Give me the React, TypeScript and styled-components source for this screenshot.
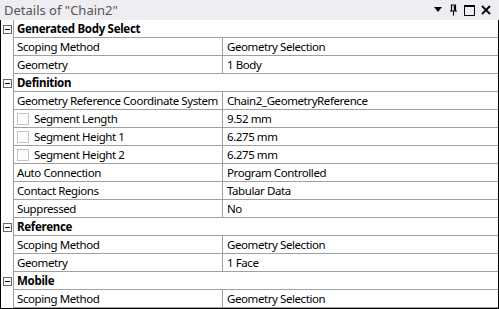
import { createGlobalStyle } from "styled-components";
import styled from "styled-components";

const Global = createGlobalStyle`
  *, *::before, *::after { box-sizing: border-box; }
  html, body { margin: 0; padding: 0; background: #fff; }
  body { font-family: "Noto Sans", "Open Sans", sans-serif; }
`;

const Panel = styled.div`
  width: 499px;
  height: 309px;
  display: flex;
  flex-direction: column;
  overflow: hidden;
  background: #fff;
`;

const TitleBar = styled.div`
  height: 20px;
  display: flex;
  align-items: center;
  background: #eeeef2;
  padding-left: 4px;
  padding-right: 8px;
`;

const Title = styled.span`
  font-size: 13px;
  color: #555;
  white-space: nowrap;
`;

const Grip = styled.div`
  flex: 1;
  height: 5px;
  margin: 0 8px 0 6px;
  background-image: radial-gradient(#a8a8b0 0.6px, transparent 0.7px);
  background-size: 2px 2px;
`;

const TitleIcons = styled.div`
  display: flex;
  align-items: center;
  gap: 6px;
`;

const Table = styled.div`
  flex: 1;
  border: 1px solid #000;
  border-top: none;
  display: flex;
  flex-direction: column;
`;

const Row = styled.div`
  height: 18px;
  display: flex;
`;

const Gutter = styled.div`
  width: 13px;
  flex: none;
  border-right: 1px solid #a0a0a0;
  display: flex;
  align-items: center;
  justify-content: center;
`;

const Expander = styled.div`
  width: 9px;
  height: 9px;
  border: 1px solid #666;
  position: relative;
  &::after {
    content: "";
    position: absolute;
    left: 1px;
    right: 1px;
    top: 3px;
    height: 1px;
    background: #000;
  }
`;

const Body = styled.div<{ $header?: boolean }>`
  flex: 1;
  display: flex;
  border-bottom: 1px solid #a0a0a0;
  font-size: 11.5px;
  letter-spacing: -0.42px;
  color: #000;
  font-weight: ${(p) => (p.$header ? 700 : 400)};
  line-height: 17px;
`;

const NameCell = styled.div`
  width: 209px;
  flex: none;
  border-right: 1px solid #a0a0a0;
  padding-left: 3px;
  display: flex;
  align-items: center;
  white-space: nowrap;
  overflow: hidden;
`;

const ValueCell = styled.div`
  flex: 1;
  padding-left: 4px;
  display: flex;
  align-items: center;
  white-space: nowrap;
`;

const HeaderCell = styled.div`
  padding-left: 3px;
  display: flex;
  align-items: center;
  letter-spacing: -0.3px;
`;

const Check = styled.span`
  width: 12px;
  height: 12px;
  border: 1px solid #c4c4c4;
  background: #fff;
  margin-right: 5px;
  flex: none;
`;

type Item =
  | { kind: "group"; label: string }
  | { kind: "prop"; name: string; value: string; check?: boolean };

const items: Item[] = [
  { kind: "group", label: "Generated Body Select" },
  { kind: "prop", name: "Scoping Method", value: "Geometry Selection" },
  { kind: "prop", name: "Geometry", value: "1 Body" },
  { kind: "group", label: "Definition" },
  { kind: "prop", name: "Geometry Reference Coordinate System", value: "Chain2_GeometryReference" },
  { kind: "prop", name: "Segment Length", value: "9.52 mm", check: true },
  { kind: "prop", name: "Segment Height 1", value: "6.275 mm", check: true },
  { kind: "prop", name: "Segment Height 2", value: "6.275 mm", check: true },
  { kind: "prop", name: "Auto Connection", value: "Program Controlled" },
  { kind: "prop", name: "Contact Regions", value: "Tabular Data" },
  { kind: "prop", name: "Suppressed", value: "No" },
  { kind: "group", label: "Reference" },
  { kind: "prop", name: "Scoping Method", value: "Geometry Selection" },
  { kind: "prop", name: "Geometry", value: "1 Face" },
  { kind: "group", label: "Mobile" },
  { kind: "prop", name: "Scoping Method", value: "Geometry Selection" },
];

export default function App() {
  return (
    <Panel>
      <Global />
      <TitleBar>
        <Title>Details of "Chain2"</Title>
        <Grip />
        <TitleIcons>
          <svg width="9" height="6" viewBox="0 0 9 6">
            <path d="M0 0 H8 L4 5 Z" fill="#000" />
          </svg>
          <svg width="9" height="12" viewBox="0 0 9 12">
            <path d="M2.5 1 H6.5 V7 H2.5 Z M1 7 H8 M4.5 7 V11.5" stroke="#000" strokeWidth="1.2" fill="none" />
            <path d="M5.5 1.5 V6.5" stroke="#000" strokeWidth="1.4" />
          </svg>
          <svg width="11" height="11" viewBox="0 0 11 11">
            <rect x="0.5" y="0.5" width="10" height="10" fill="none" stroke="#000" />
            <rect x="0.5" y="0.5" width="10" height="1.5" fill="#000" />
          </svg>
          <svg width="10" height="10" viewBox="0 0 10 10">
            <path d="M1 1 L9 9 M9 1 L1 9" stroke="#000" strokeWidth="1.8" />
          </svg>
        </TitleIcons>
      </TitleBar>
      <Table>
        {items.map((it, i) =>
          it.kind === "group" ? (
            <Row key={i}>
              <Gutter>
                <Expander />
              </Gutter>
              <Body $header>
                <HeaderCell>{it.label}</HeaderCell>
              </Body>
            </Row>
          ) : (
            <Row key={i}>
              <Gutter />
              <Body>
                <NameCell>
                  {it.check && <Check />}
                  {it.name}
                </NameCell>
                <ValueCell>{it.value}</ValueCell>
              </Body>
            </Row>
          )
        )}
      </Table>
    </Panel>
  );
}
